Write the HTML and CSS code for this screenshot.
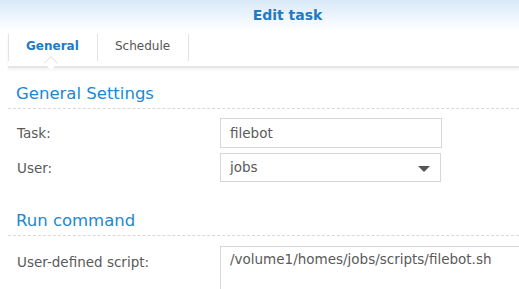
FILE: index.html
```html
<!DOCTYPE html>
<html lang="en">
<head>
  <meta charset="UTF-8" />
  <title>Edit task</title>
  <link rel="stylesheet" href="styles.css">
</head>
<body>

<header class="title-bar">Edit task</header>

<nav class="tabs">
  <a class="tab active">General</a>
  <a class="tab">Schedule</a>
</nav>

<div class="content">
  <h2 class="section-title">General Settings</h2>

  <div class="row">
    <label class="label">Task:</label>
    <div class="field">filebot</div>
  </div>
  <div class="row">
    <label class="label">User:</label>
    <div class="field select">jobs<span class="caret"></span></div>
  </div>

  <h2 class="section-title run">Run command</h2>

  <div class="row script-row">
    <label class="label">User-defined script:</label>
    <div class="field textarea">/volume1/homes/jobs/scripts/filebot.sh</div>
  </div>
</div>

</body>
</html>
```

FILE: styles.css
```css
body {
  margin: 0;
  font-family: 'DejaVu Sans', Verdana, sans-serif;
  background: #fff;
  color: #555;
  overflow: hidden;
}

.title-bar {
  height: 32px;
  line-height: 30px;
  text-align: center;
  font-size: 14px;
  font-weight: bold;
  color: #1f7bc4;
  background: linear-gradient(#d9e9f8, #f4f9fe 70%, #fff);
  padding-left: 56px;
}

.tabs {
  display: flex;
  margin-left: 8px;
  height: 34px;
  border-bottom: 2px solid #e6e6e4;
  box-shadow: 0 2px 3px rgba(0, 0, 0, 0.05);
  position: relative;
}

.tab {
  position: relative;
  padding: 0 17px;
  height: 27px;
  margin-top: 2px;
  line-height: 24px;
  font-size: 12px;
  border-right: 1px solid #e3e3e3;
  color: #555;
}

.tab:first-child {
  border-left: 1px solid #e3e3e3;
  width: 54px;
}

.tab:nth-child(2) {
  width: 56px;
}

.tab.active {
  font-weight: bold;
  color: #1f7bc4;
}

.tab.active::after {
  content: "";
  position: absolute;
  left: 37px;
  bottom: -7px;
  width: 9px;
  height: 9px;
  background: #fff;
  border-left: 1px solid #e6e6e4;
  border-top: 1px solid #e6e6e4;
  transform: rotate(45deg);
}

.content {
  padding: 0 0 0 8px;
}

.section-title {
  margin: 0;
  padding: 16px 0 5px 8px;
  font-size: 16.5px;
  font-weight: normal;
  color: #2087d0;
  border-bottom: 1px dashed #d4d9de;
}

.section-title.run {
  padding-top: 29px;
}

.row {
  display: flex;
  align-items: center;
  margin-top: 5px;
}

.row:first-of-type {
  margin-top: 9px;
}

.label {
  width: 203px;
  padding-left: 9px;
  font-size: 13.5px;
  color: #5a5a5a;
}

.field {
  position: relative;
  box-sizing: border-box;
  width: 222px;
  height: 30px;
  line-height: 28px;
  padding-left: 9px;
  border: 1px solid #d4d8dc;
  font-size: 13.5px;
  color: #5a5a5a;
}

.select {
  width: 221px;
  height: 29px;
  line-height: 27px;
}

.caret {
  position: absolute;
  right: 10px;
  top: 12px;
  border-left: 6px solid transparent;
  border-right: 6px solid transparent;
  border-top: 6px solid #555;
}

.script-row {
  align-items: flex-start;
  margin-top: 10px;
}

.script-row .label {
  padding-top: 8px;
}

.textarea {
  flex: 1;
  height: 45px;
  line-height: 24px;
  border-right: none;
  border-bottom: none;
}
```
